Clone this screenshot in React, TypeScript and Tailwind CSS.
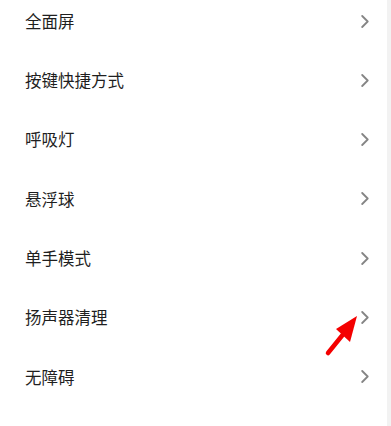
import React from "react";

const items = ["全面屏", "按键快捷方式", "呼吸灯", "悬浮球", "单手模式", "扬声器清理", "无障碍"];

const Chevron = () => (
  <svg width="8" height="13" viewBox="0 0 8 13" fill="none">
    <path d="M1.2 1l5.5 5.5L1.2 12" stroke="#858585" strokeWidth="1.8" strokeLinecap="round" strokeLinejoin="round" />
  </svg>
);

export default function App() {
  return (
    <div className="relative flex h-[426px] w-[391px] overflow-hidden bg-white font-['Noto_Sans_CJK_SC','Noto_Sans',sans-serif]">
      <div className="flex-1">
        <div className="mt-[-8.67px] flex flex-col">
          {items.map((label) => (
            <div key={label} className="flex h-[59.33px] items-center justify-between pl-[25px] pr-[18px]">
              <span className="text-[16.5px] text-[#1f1f1f]">{label}</span>
              <Chevron />
            </div>
          ))}
        </div>
      </div>
      <div className="w-[4px] bg-[#f2f2f2]" />
      <svg className="absolute left-0 top-0" width="391" height="426" viewBox="0 0 391 426">
        <line x1="328" y1="353" x2="345" y2="332" stroke="#f40000" strokeWidth="4.5" strokeLinecap="round" />
        <polygon points="357,316 336,329 350,342" fill="#f40000" />
      </svg>
    </div>
  );
}
